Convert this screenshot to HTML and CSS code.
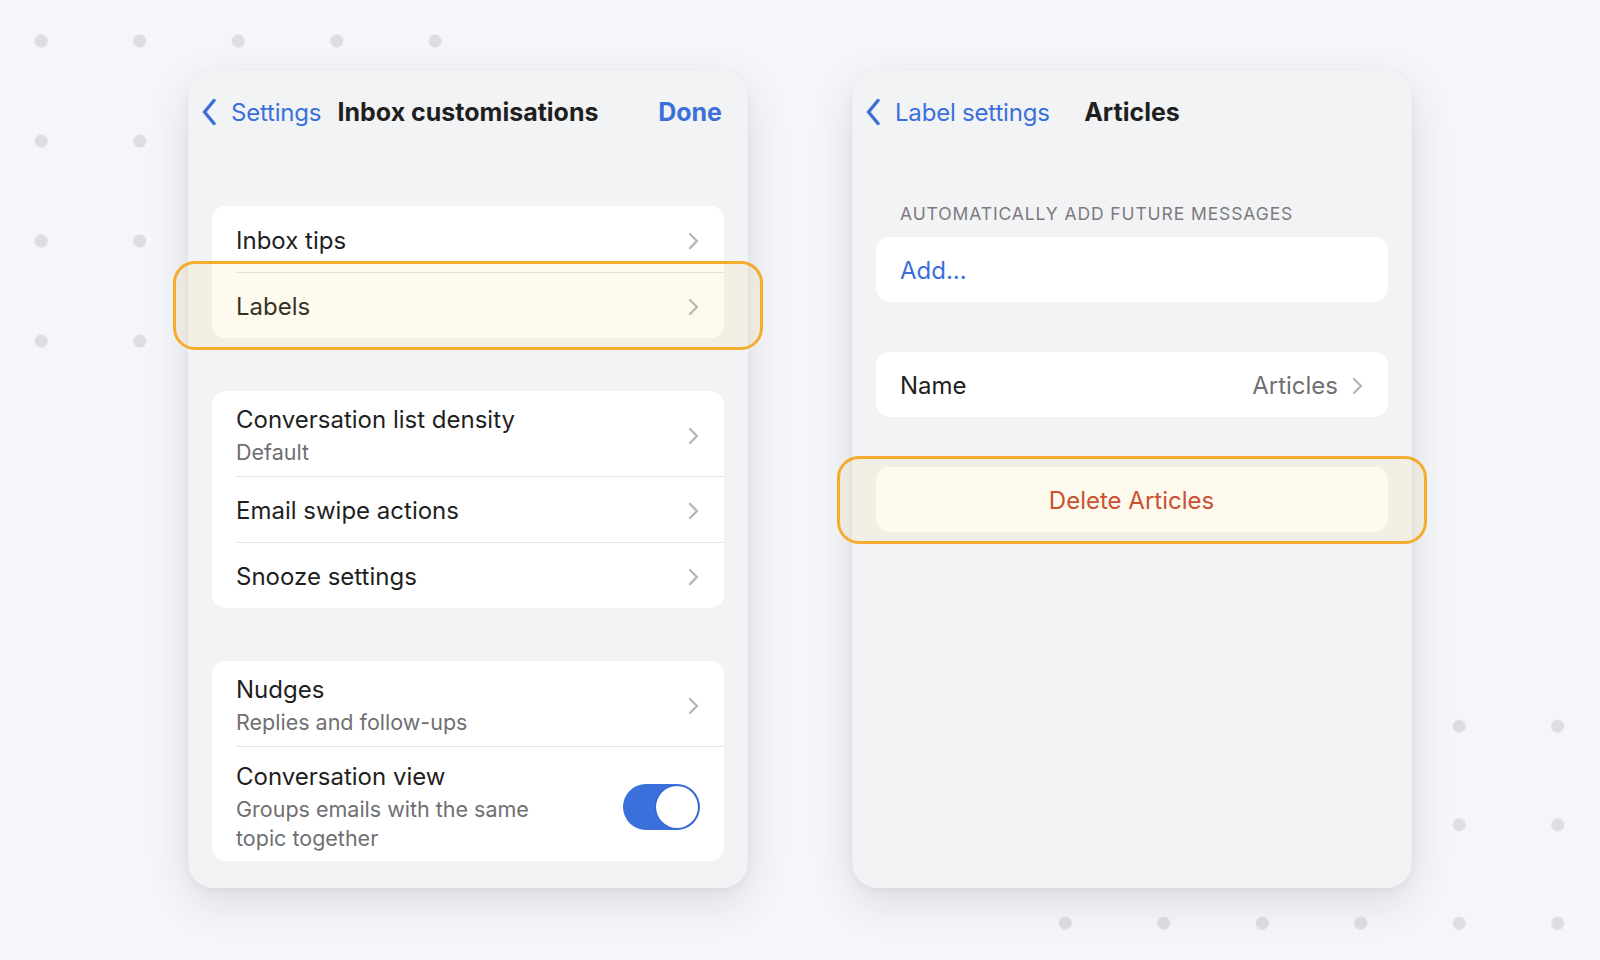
FILE: index.html
```html
<!DOCTYPE html>
<html lang="en">
<head>
    <meta charset="UTF-8">
    <meta name="viewport" content="width=device-width, initial-scale=1.0">
    <title>Inbox customisations</title>
    <link rel="stylesheet" href="styles.css">
</head>
<body>
    <div class="dots dots-top"></div>
    <div class="dots dots-bottom"></div>

    <main class="screens">
        <!-- Left screen: inbox customisations -->
        <section class="panel">
            <header class="nav">
                <a class="nav-back">
                    <svg class="back-icon" viewBox="0 0 14 28" width="14" height="28"><path d="M12 2.5 L2.5 14 L12 25.5"/></svg>
                    <span>Settings</span>
                </a>
                <h1 class="nav-title">Inbox customisations</h1>
                <a class="nav-action">Done</a>
            </header>
            <div class="panel-body">
                <ul class="group">
                    <li class="row">
                        <span class="row-text"><span class="row-title">Inbox tips</span></span>
                        <svg class="chevron" viewBox="0 0 11 18" width="11" height="18"><path d="M2 2 L9 9 L2 16"/></svg>
                    </li>
                    <li class="row highlight">
                        <span class="row-text"><span class="row-title">Labels</span></span>
                        <svg class="chevron" viewBox="0 0 11 18" width="11" height="18"><path d="M2 2 L9 9 L2 16"/></svg>
                    </li>
                </ul>

                <ul class="group">
                    <li class="row two-line">
                        <span class="row-text">
                            <span class="row-title">Conversation list density</span>
                            <span class="row-sub">Default</span>
                        </span>
                        <svg class="chevron" viewBox="0 0 11 18" width="11" height="18"><path d="M2 2 L9 9 L2 16"/></svg>
                    </li>
                    <li class="row">
                        <span class="row-text"><span class="row-title">Email swipe actions</span></span>
                        <svg class="chevron" viewBox="0 0 11 18" width="11" height="18"><path d="M2 2 L9 9 L2 16"/></svg>
                    </li>
                    <li class="row">
                        <span class="row-text"><span class="row-title">Snooze settings</span></span>
                        <svg class="chevron" viewBox="0 0 11 18" width="11" height="18"><path d="M2 2 L9 9 L2 16"/></svg>
                    </li>
                </ul>

                <ul class="group">
                    <li class="row two-line">
                        <span class="row-text">
                            <span class="row-title">Nudges</span>
                            <span class="row-sub">Replies and follow-ups</span>
                        </span>
                        <svg class="chevron" viewBox="0 0 11 18" width="11" height="18"><path d="M2 2 L9 9 L2 16"/></svg>
                    </li>
                    <li class="row three-line">
                        <span class="row-text">
                            <span class="row-title">Conversation view</span>
                            <span class="row-sub wrap">Groups emails with the same topic together</span>
                        </span>
                        <span class="toggle on"></span>
                    </li>
                </ul>
            </div>
        </section>

        <!-- Right screen: label settings -->
        <section class="panel">
            <header class="nav">
                <a class="nav-back">
                    <svg class="back-icon" viewBox="0 0 14 28" width="14" height="28"><path d="M12 2.5 L2.5 14 L12 25.5"/></svg>
                    <span>Label settings</span>
                </a>
                <h1 class="nav-title">Articles</h1>
                <span></span>
            </header>
            <div class="panel-body">
                <div class="section-label">Automatically add future messages</div>
                <ul class="group compact flush">
                    <li class="row"><span class="row-title link">Add...</span></li>
                </ul>

                <ul class="group compact spaced">
                    <li class="row">
                        <span class="row-text"><span class="row-title">Name</span></span>
                        <span class="row-value">Articles</span>
                        <svg class="chevron" viewBox="0 0 11 18" width="11" height="18"><path d="M2 2 L9 9 L2 16"/></svg>
                    </li>
                </ul>

                <ul class="group compact spaced">
                    <li class="row centered highlight">
                        <span class="row-title danger">Delete Articles</span>
                    </li>
                </ul>
            </div>
        </section>
    </main>
</body>
</html>
```

FILE: styles.css
```css
* {
    margin: 0;
    padding: 0;
    box-sizing: border-box;
    font-family: 'Inter', 'Roboto', 'Liberation Sans', sans-serif;
}

body {
    background: #f5f6f9;
    color: #1f1f1f;
    width: 1600px;
    height: 960px;
    overflow: hidden;
    position: relative;
}

/* Decorative dot grids behind the screens */
.dots {
    position: absolute;
    background-image: radial-gradient(circle, #dddee3 6px, rgba(221, 222, 227, 0) 7px);
}

.dots-top {
    left: 0;
    top: 0;
    width: 485px;
    height: 392px;
    background-size: 98.5px 100px;
    background-position: -8px -9px;
}

.dots-bottom {
    left: 1016px;
    top: 677px;
    width: 584px;
    height: 283px;
    background-size: 98.5px 98.5px;
}

.screens {
    position: relative;
    z-index: 1;
    display: flex;
    justify-content: center;
    gap: 104px;
    padding-top: 71px;
}

.panel {
    width: 560px;
    height: 817px;
    background: #f2f3f5;
    border-radius: 26px;
    box-shadow: 0 14px 40px rgba(40, 45, 60, 0.13), 0 2px 6px rgba(40, 45, 60, 0.05);
}

/* Navigation bar */
.nav {
    height: 82px;
    display: grid;
    grid-template-columns: 1fr auto 1fr;
    align-items: center;
    padding: 0 14px;
}

.nav-back {
    display: flex;
    align-items: center;
    gap: 15px;
    color: #3b70db;
    font-size: 24px;
    letter-spacing: -0.2px;
}

.back-icon path {
    fill: none;
    stroke: #3b70db;
    stroke-width: 3.4;
    stroke-linecap: round;
    stroke-linejoin: round;
}

.nav-title {
    font-size: 25px;
    font-weight: 700;
    color: #1f1f1f;
}

.nav-action {
    justify-self: end;
    margin-right: 12px;
    font-size: 25px;
    font-weight: 700;
    color: #3b70db;
}

.panel-body {
    padding: 0 24px;
}

.section-label {
    margin: 47px 0 9px;
    padding-left: 24px;
    font-size: 17.5px;
    line-height: 28px;
    letter-spacing: 0.9px;
    text-transform: uppercase;
    color: #7b7b7f;
}

/* Grouped lists */
.group {
    list-style: none;
    background: #fff;
    border-radius: 14px;
    margin-top: 53px;
}

.group.flush {
    margin-top: 0;
}

.group.spaced {
    margin-top: 50px;
}

.row {
    position: relative;
    display: flex;
    align-items: center;
    min-height: 66px;
    padding: 3px 25px 0 24px;
}

.group.compact .row {
    min-height: 65px;
    padding-top: 2px;
}

.row + .row::before {
    content: '';
    position: absolute;
    top: 0;
    left: 24px;
    right: 0;
    height: 1px;
    background: #e3e3e6;
}

.row.two-line {
    padding-top: 13px;
    padding-bottom: 8px;
}

.row.three-line {
    padding-top: 15px;
    padding-bottom: 8px;
}

.row.centered {
    justify-content: center;
}

.row-text {
    flex: 1;
    display: flex;
    flex-direction: column;
}

.row-title {
    font-size: 24px;
    line-height: 32px;
    color: #1f1f1f;
}

.row-sub {
    font-size: 21.5px;
    line-height: 32px;
    color: #6f6f73;
}

.row-sub.wrap {
    max-width: 305px;
    line-height: 29px;
    margin-top: 2px;
}

.row-value {
    font-size: 24px;
    color: #707074;
    margin-right: 14px;
}

.link {
    color: #3b70db;
}

.danger {
    color: #c5432d;
}

.chevron path {
    fill: none;
    stroke: #b5b5b9;
    stroke-width: 2.3;
    stroke-linecap: round;
    stroke-linejoin: round;
}

/* Orange call-out drawn over a row */
.highlight::after {
    content: '';
    position: absolute;
    top: -11px;
    bottom: -12px;
    left: -39px;
    right: -39px;
    border: 3px solid #f5ac2e;
    border-radius: 22px;
    background: rgba(250, 205, 90, 0.1);
}

.toggle {
    position: relative;
    width: 77px;
    height: 46px;
    border-radius: 23px;
    background: #3a6fdc;
    margin-right: -1px;
}

.toggle.on::after {
    content: '';
    position: absolute;
    top: 2px;
    right: 2px;
    width: 42px;
    height: 42px;
    border-radius: 50%;
    background: #fff;
    box-shadow: 0 0 0 1px rgba(30, 70, 170, 0.35);
}
```
